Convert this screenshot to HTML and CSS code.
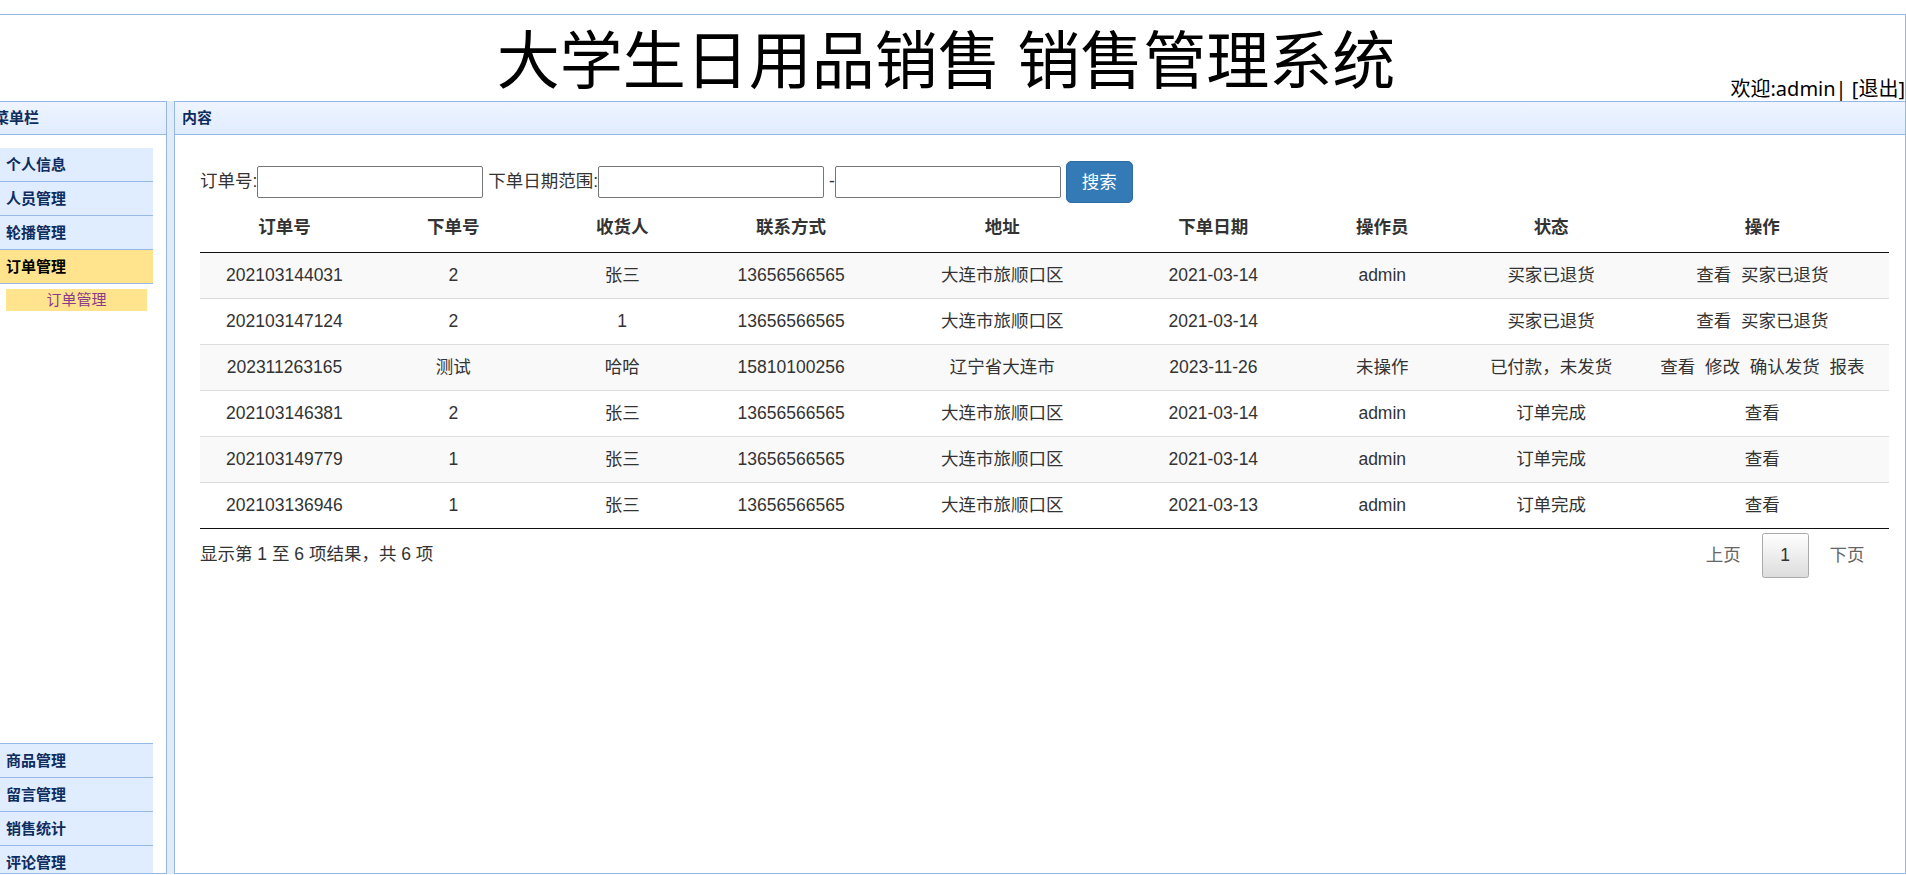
FILE: index.html
```html
<!DOCTYPE html>
<html lang="zh-CN">
<head>
    <meta charset="UTF-8"/>
    <title>大学生日用品销售 销售管理系统</title>
    <link rel="stylesheet" href="styles.css">
</head>
<body>
<div class="top">
    <h1 class="top-title">大学生日用品销售 销售管理系统</h1>
    <div class="top-user">欢迎:admin| [<a href="#">退出</a>]</div>
</div>
<div class="layout">
    <div class="west">
        <div class="panel-title">菜单栏</div>
        <div class="menu">
            <div class="menu-item">个人信息</div>
            <div class="menu-item">人员管理</div>
            <div class="menu-item">轮播管理</div>
            <div class="menu-item active">订单管理</div>
            <div class="menu-body">
                <a class="sub-item" href="#">订单管理</a>
            </div>
            <div class="menu-item">商品管理</div>
            <div class="menu-item">留言管理</div>
            <div class="menu-item">销售统计</div>
            <div class="menu-item">评论管理</div>
        </div>
    </div>
    <div class="splitter"></div>
    <div class="center">
        <div class="panel-title">内容</div>
        <div class="content">
            <form class="search">订单号:<input type="text"> 下单日期范围:<input type="text"> -<input type="text"> <button type="button" class="btn">搜索</button></form>
            <table class="orders">
                <colgroup>
                    <col class="c-narrow"><col class="c-narrow"><col class="c-narrow"><col class="c-narrow">
                    <col class="c-wide">
                    <col class="c-narrow"><col class="c-narrow"><col class="c-narrow">
                    <col class="c-wide">
                </colgroup>
                <thead>
                    <tr>
                        <th>订单号</th>
                        <th>下单号</th>
                        <th>收货人</th>
                        <th>联系方式</th>
                        <th>地址</th>
                        <th>下单日期</th>
                        <th>操作员</th>
                        <th>状态</th>
                        <th>操作</th>
                    </tr>
                </thead>
                <tbody>
                    <tr>
                        <td>202103144031</td><td>2</td><td>张三</td><td>13656566565</td><td>大连市旅顺口区</td>
                        <td>2021-03-14</td><td>admin</td><td>买家已退货</td>
                        <td><a href="#">查看</a>&nbsp; <a href="#">买家已退货</a></td>
                    </tr>
                    <tr>
                        <td>202103147124</td><td>2</td><td>1</td><td>13656566565</td><td>大连市旅顺口区</td>
                        <td>2021-03-14</td><td></td><td>买家已退货</td>
                        <td><a href="#">查看</a>&nbsp; <a href="#">买家已退货</a></td>
                    </tr>
                    <tr>
                        <td>202311263165</td><td>测试</td><td>哈哈</td><td>15810100256</td><td>辽宁省大连市</td>
                        <td>2023-11-26</td><td>未操作</td><td>已付款，未发货</td>
                        <td><a href="#">查看</a>&nbsp; <a href="#">修改</a>&nbsp; <a href="#">确认发货</a>&nbsp; <a href="#">报表</a></td>
                    </tr>
                    <tr>
                        <td>202103146381</td><td>2</td><td>张三</td><td>13656566565</td><td>大连市旅顺口区</td>
                        <td>2021-03-14</td><td>admin</td><td>订单完成</td>
                        <td><a href="#">查看</a></td>
                    </tr>
                    <tr>
                        <td>202103149779</td><td>1</td><td>张三</td><td>13656566565</td><td>大连市旅顺口区</td>
                        <td>2021-03-14</td><td>admin</td><td>订单完成</td>
                        <td><a href="#">查看</a></td>
                    </tr>
                    <tr>
                        <td>202103136946</td><td>1</td><td>张三</td><td>13656566565</td><td>大连市旅顺口区</td>
                        <td>2021-03-13</td><td>admin</td><td>订单完成</td>
                        <td><a href="#">查看</a></td>
                    </tr>
                </tbody>
            </table>
            <div class="table-foot">
                <div class="info">显示第 1 至 6 项结果，共 6 项</div>
                <div class="pager">
                    <a class="page-btn" href="#">上页</a>
                    <a class="page-btn current" href="#">1</a>
                    <a class="page-btn" href="#">下页</a>
                </div>
            </div>
        </div>
    </div>
</div>
</body>
</html>
```
FILE: styles.css
```css
html, body {margin:0;background:#fff;}
body {color:#333;font:17.5px/1.42857 "Liberation Sans", "Noto Sans CJK SC", sans-serif;overflow:hidden;}
a {color:inherit;text-decoration:none;}

.top {border-right:1px solid #95b8e7;border-top:1px solid #95b8e7;display:grid;grid-template-columns:1fr auto 1fr;align-items:center;height:86px;margin-top:14px;}
.top-title {grid-column:2;color:#000;font:400 63px/1 "Noto Sans", "Noto Sans CJK SC", sans-serif;margin:0 13px 0 0;}
.top-user {align-self:end;justify-self:end;color:#000;font:20px/1.2 "Noto Sans", "Noto Sans CJK SC", sans-serif;white-space:nowrap;}

.layout {display:flex;height:773px;margin-left:-14px;}
.west {border:1px solid #95b8e7;box-sizing:border-box;display:flex;flex-direction:column;overflow:hidden;width:181px;}
.splitter {background:#e2ebf8;width:7px;}
.center {border:1px solid #95b8e7;flex:1;min-width:0;}

.panel-title {background:linear-gradient(#eff5ff, #e0ecff);border-bottom:1px solid #95b8e7;color:#0e2d5f;font-size:15px;font-weight:bold;height:32px;line-height:32px;padding-left:7px;}

.menu {margin-right:13px;padding-top:13px;}
.menu-item {background:#e0ecff;border-bottom:1px solid #95b8e7;color:#0e2d5f;font-size:15px;font-weight:bold;height:33px;line-height:33px;padding-left:19px;}
.menu-item.active {background:#ffe48d;color:#000;}
.menu-body {border-bottom:1px solid #95b8e7;height:454px;padding-top:5px;}
.sub-item {background:#ffe48d;color:#8b3a8b;display:block;font-size:15px;height:22px;line-height:22px;margin:0 6px 0 19px;text-align:center;}

.content {padding:25px 16px 0 25px;}
.search {height:42px;line-height:42px;margin:0;white-space:nowrap;}
.search input {border:1px solid #767676;border-radius:2px;box-sizing:border-box;font:inherit;height:32px;padding:0 3px;vertical-align:middle;width:226px;}
.btn {background:#337ab7;border:1px solid #2e6da4;border-radius:5px;color:#fff;font:inherit;height:42px;line-height:40px;padding:0 15px;vertical-align:middle;}

.orders {border-bottom:1px solid #111;border-spacing:0;table-layout:fixed;width:100%;}
.c-narrow {width:10%;}
.c-wide {width:15%;}
.orders th {border-bottom:1px solid #111;font-weight:bold;line-height:25px;padding:12.5px 10px;text-align:center;}
.orders td {border-top:1px solid #ddd;line-height:25px;padding:10px;text-align:center;white-space:nowrap;}
.orders tbody tr:first-child td {border-top:0;}
.orders tbody tr:nth-child(odd) {background:#f9f9f9;}

.table-foot {display:flex;justify-content:space-between;align-items:flex-start;}
.info {line-height:25px;padding-top:13px;}
.pager {display:flex;margin-right:6px;padding-top:4px;}
.page-btn {border:1px solid transparent;border-radius:2.5px;color:#666;line-height:25px;margin-left:2.5px;padding:8.75px 17.5px;}
.page-btn.current {background:linear-gradient(#fff, #dcdcdc);border-color:#aaa;color:#333;}
```
